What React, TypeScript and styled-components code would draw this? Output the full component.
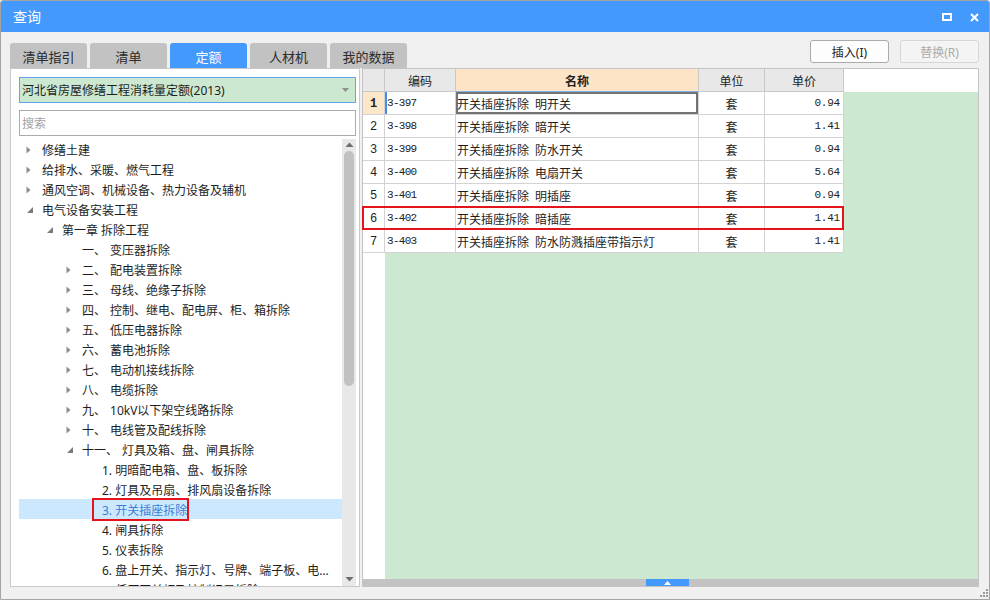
import React from 'react';
import styled, { createGlobalStyle } from 'styled-components';

const FONT = `"Noto Sans", "Noto Sans CJK SC", "Microsoft YaHei", sans-serif`;
const MONO = `"Liberation Mono", "Noto Sans CJK SC", monospace`;

const GlobalStyle = createGlobalStyle`
  html, body { margin: 0; padding: 0; background: #ffffff; }
  body {
    font-family: ${FONT};
    font-size: 12px;
    color: #1e1e1e;
  }
  * { box-sizing: border-box; }
`;

const Window = styled.div`
  position: relative;
  width: 990px;
  height: 600px;
  border: 1px solid #a4a4a4;
  border-radius: 3px 3px 0 0;
  background: #f0f0f0;
  display: flex;
  flex-direction: column;
  overflow: hidden;
`;

const TitleBar = styled.div`
  height: 31px;
  flex: none;
  background: #4499fd;
  color: #ffffff;
  display: flex;
  align-items: center;
  justify-content: space-between;
  padding: 0 10px 0 12px;
  font-size: 14px;
`;

const TitleText = styled.span`
  line-height: 31px;
`;

const WinButtons = styled.div`
  display: flex;
  align-items: center;
  gap: 18px;
  padding-top: 1px;
`;

const Body = styled.div`
  flex: 1;
  display: flex;
  flex-direction: column;
  padding: 8px 10px 12px 9px;
  min-height: 0;
`;

const Toolbar = styled.div`
  height: 28px;
  flex: none;
  display: flex;
  align-items: flex-start;
  justify-content: space-between;
`;

const Tabs = styled.div`
  display: flex;
  gap: 3px;
  margin-top: 3px;
`;

const Tab = styled.div<{ $active?: boolean }>`
  width: 77px;
  height: 25px;
  border-radius: 3px 3px 0 0;
  background: ${(p) => (p.$active ? '#4499fd' : '#c2c2c2')};
  color: ${(p) => (p.$active ? '#ffffff' : '#2a2a2a')};
  display: flex;
  align-items: center;
  justify-content: center;
  font-size: 13px;
  padding-top: 1px;
`;

const Buttons = styled.div`
  display: flex;
  gap: 11px;
`;

const Button = styled.div<{ $disabled?: boolean }>`
  width: 79px;
  height: 23px;
  border: 1px solid ${(p) => (p.$disabled ? '#d6d6d6' : '#ababab')};
  border-radius: 3px;
  background: ${(p) => (p.$disabled ? '#f4f4f4' : '#fdfdfd')};
  color: ${(p) => (p.$disabled ? '#ababab' : '#222222')};
  display: flex;
  align-items: center;
  justify-content: center;
  font-size: 12px;
`;

const Content = styled.div`
  flex: 1;
  display: flex;
  gap: 2px;
  min-height: 0;
`;

const LeftPanel = styled.div`
  width: 350px;
  flex: none;
  background: #ffffff;
  border: 1px solid #c9c9c9;
  padding: 8px 3px 0 8px;
  display: flex;
  flex-direction: column;
  min-height: 0;
`;

const Select = styled.div`
  height: 26px;
  flex: none;
  border: 1px solid #62a3ec;
  background: #cde8d1;
  display: flex;
  align-items: center;
  justify-content: space-between;
  padding: 0 6px 0 2px;
  font-size: 12px;
  color: #1e1e1e;
`;

const Search = styled.div`
  height: 26px;
  flex: none;
  margin-top: 7px;
  border: 1px solid #ababab;
  background: #ffffff;
  display: flex;
  align-items: center;
  padding: 0 2px;
  color: #a3a3a3;
  font-size: 12px;
`;

const TreeArea = styled.div`
  flex: 1;
  margin-top: 3px;
  display: flex;
  min-height: 0;
  overflow: hidden;
`;

const TreeList = styled.div`
  flex: 1;
  min-width: 0;
  overflow: hidden;
`;

const TreeRow = styled.div<{ $level: number; $selected?: boolean }>`
  height: 20px;
  display: flex;
  align-items: center;
  padding-top: 3px;
  padding-left: ${(p) => 3 + p.$level * 20}px;
  padding-right: 6px;
  background: ${(p) => (p.$selected ? '#cce8ff' : 'transparent')};
  color: ${(p) => (p.$selected ? '#3a7fd4' : '#1e1e1e')};
  white-space: nowrap;
`;

const Toggle = styled.span`
  width: 20px;
  flex: none;
  display: flex;
  align-items: center;
  padding-left: 4px;
  padding-bottom: 2px;
`;

const TreeLabel = styled.span<{ $marked?: boolean }>`
  position: relative;
  min-width: 0;
  overflow: ${(p) => (p.$marked ? 'visible' : 'hidden')};
  text-overflow: ellipsis;
  line-height: 17px;
  &::after {
    content: '';
    display: ${(p) => (p.$marked ? 'block' : 'none')};
    position: absolute;
    left: -10px;
    right: -2px;
    top: -4px;
    bottom: -2px;
    border: 2px solid #e3141c;
  }
`;

const Num = styled.span`
  margin-right: 4px;
`;

const VScroll = styled.div`
  width: 14px;
  flex: none;
  background: #e8e8e8;
  display: flex;
  flex-direction: column;
  align-items: center;
  padding: 3px 0 4px;
`;

const VThumb = styled.div`
  width: 10px;
  height: 235px;
  margin-top: 4px;
  border-radius: 5px;
  background: #c1c1c1;
`;

const VSpacer = styled.div`
  flex: 1;
`;

const RightPanel = styled.div`
  flex: 1;
  min-width: 0;
  background: #ffffff;
  border: 1px solid #c4c4c4;
  display: flex;
  flex-direction: column;
`;

const Grid = styled.div`
  flex: 1;
  display: flex;
  flex-direction: column;
  min-height: 0;
`;

const HeadRow = styled.div`
  height: 23px;
  flex: none;
  display: flex;
`;

const HeadCell = styled.div<{ $w: number; $active?: boolean }>`
  width: ${(p) => p.$w}px;
  flex: none;
  background: ${(p) => (p.$active ? '#fde4c6' : '#e8e8e8')};
  border-right: 1px solid #c8c8c8;
  border-bottom: 1px solid ${(p) => (p.$active ? '#7fb2ea' : '#c8c8c8')};
  display: flex;
  align-items: center;
  justify-content: center;
  padding-top: 1px;
  font-weight: ${(p) => (p.$active ? 700 : 400)};
  font-size: 12px;
  color: #222;
`;

const Filler = styled.div<{ $green?: boolean }>`
  flex: 1;
  background: ${(p) => (p.$green ? '#cde8d1' : '#ffffff')};
`;

const Row = styled.div`
  height: 23px;
  flex: none;
  display: flex;
`;

const RowCells = styled.div<{ $marked?: boolean }>`
  position: relative;
  width: 481px;
  flex: none;
  display: flex;
  background: #ffffff;
  &::after {
    content: '';
    display: ${(p) => (p.$marked ? 'block' : 'none')};
    position: absolute;
    left: -1px;
    right: 0;
    top: -1px;
    bottom: 0;
    border: 2px solid #e3141c;
    pointer-events: none;
  }
`;

const Cell = styled.div<{ $w: number; $align?: string }>`
  width: ${(p) => p.$w}px;
  flex: none;
  border-right: 1px solid #d3d3d3;
  border-bottom: 1px solid #d3d3d3;
  display: flex;
  align-items: center;
  justify-content: ${(p) => p.$align || 'flex-start'};
  padding: 0 1px;
  white-space: nowrap;
  overflow: hidden;
`;

const NumCell = styled(Cell)<{ $current?: boolean }>`
  background: ${(p) => (p.$current ? '#fde7cb' : '#ffffff')};
  font-family: ${MONO};
  font-size: 12px;
  font-weight: ${(p) => (p.$current ? 700 : 400)};
  color: #222;
  padding-top: 1px;
`;

const CodeCell = styled(Cell)<{ $current?: boolean }>`
  font-family: ${MONO};
  font-size: 11px;
  letter-spacing: -0.7px;
  padding-left: 2px;
  color: #222;
  box-shadow: ${(p) => (p.$current ? 'inset 2px 0 0 #3f8fe9' : 'none')};
`;

const NameCell = styled(Cell)<{ $current?: boolean }>`
  font-size: 12px;
  word-spacing: 3px;
  padding-top: 2px;
  color: #1e1e1e;
  box-shadow: ${(p) => (p.$current ? 'inset 0 0 0 2px #737373' : 'none')};
`;

const UnitCell = styled(Cell)`
  font-size: 12px;
  padding-top: 2px;
  color: #1e1e1e;
`;

const PriceCell = styled(Cell)`
  font-family: ${MONO};
  font-size: 11px;
  letter-spacing: -0.2px;
  color: #222;
  padding-right: 3px;
`;

const BottomFill = styled.div`
  flex: 1;
  display: flex;
`;

const WhiteCol = styled.div`
  width: 22px;
  flex: none;
  background: #ffffff;
`;

const HScroll = styled.div`
  height: 7px;
  flex: none;
  background: #c3c3c3;
  display: flex;
  justify-content: center;
  padding-right: 6px;
`;

const HThumb = styled.div`
  width: 43px;
  height: 7px;
  background: #4499fd;
  display: flex;
  align-items: center;
  justify-content: center;
`;

const Grip = styled.svg`
  position: absolute;
  right: 1px;
  bottom: 2px;
`;

const ClosedArrow = () => (
  <svg width="8" height="8" viewBox="0 0 8 8">
    <path d="M0.5 0.5 L4.5 4 L0.5 7.5 Z" fill="#8c8c8c" />
  </svg>
);

const OpenArrow = () => (
  <svg width="8" height="8" viewBox="0 0 8 8">
    <path d="M7 1 L7 7 L1 7 Z" fill="#7a7a7a" />
  </svg>
);

type TreeNode = {
  level: number;
  state: 'open' | 'closed' | 'leaf';
  num?: string;
  text: string;
  selected?: boolean;
  marked?: boolean;
};

const tree: TreeNode[] = [
  { level: 0, state: 'closed', text: '修缮土建' },
  { level: 0, state: 'closed', text: '给排水、采暖、燃气工程' },
  { level: 0, state: 'closed', text: '通风空调、机械设备、热力设备及辅机' },
  { level: 0, state: 'open', text: '电气设备安装工程' },
  { level: 1, state: 'open', text: '第一章 拆除工程' },
  { level: 2, state: 'leaf', num: '一、', text: '变压器拆除' },
  { level: 2, state: 'closed', num: '二、', text: '配电装置拆除' },
  { level: 2, state: 'closed', num: '三、', text: '母线、绝缘子拆除' },
  { level: 2, state: 'closed', num: '四、', text: '控制、继电、配电屏、柜、箱拆除' },
  { level: 2, state: 'closed', num: '五、', text: '低压电器拆除' },
  { level: 2, state: 'closed', num: '六、', text: '蓄电池拆除' },
  { level: 2, state: 'closed', num: '七、', text: '电动机接线拆除' },
  { level: 2, state: 'closed', num: '八、', text: '电缆拆除' },
  { level: 2, state: 'closed', num: '九、', text: '10kV以下架空线路拆除' },
  { level: 2, state: 'closed', num: '十、', text: '电线管及配线拆除' },
  { level: 2, state: 'open', num: '十一、', text: '灯具及箱、盘、闸具拆除' },
  { level: 3, state: 'leaf', text: '1. 明暗配电箱、盘、板拆除' },
  { level: 3, state: 'leaf', text: '2. 灯具及吊扇、排风扇设备拆除' },
  { level: 3, state: 'leaf', text: '3. 开关插座拆除', selected: true, marked: true },
  { level: 3, state: 'leaf', text: '4. 闸具拆除' },
  { level: 3, state: 'leaf', text: '5. 仪表拆除' },
  { level: 3, state: 'leaf', text: '6. 盘上开关、指示灯、号牌、端子板、电阻器拆除' },
  { level: 3, state: 'leaf', text: '7. 低压开关柜及控制记录拆除' },
];

type Item = { code: string; name: string; unit: string; price: string };

const items: Item[] = [
  { code: '3-397', name: '开关插座拆除 明开关', unit: '套', price: '0.94' },
  { code: '3-398', name: '开关插座拆除 暗开关', unit: '套', price: '1.41' },
  { code: '3-399', name: '开关插座拆除 防水开关', unit: '套', price: '0.94' },
  { code: '3-400', name: '开关插座拆除 电扇开关', unit: '套', price: '5.64' },
  { code: '3-401', name: '开关插座拆除 明插座', unit: '套', price: '0.94' },
  { code: '3-402', name: '开关插座拆除 暗插座', unit: '套', price: '1.41' },
  { code: '3-403', name: '开关插座拆除 防水防溅插座带指示灯', unit: '套', price: '1.41' },
];

const tabs = ['清单指引', '清单', '定额', '人材机', '我的数据'];

export default function App() {
  return (
    <>
      <GlobalStyle />
      <Window>
        <TitleBar>
          <TitleText>查询</TitleText>
          <WinButtons>
            <svg width="10" height="8" viewBox="0 0 10 8">
              <rect x="1" y="1" width="8" height="6" fill="none" stroke="#fff" strokeWidth="2" />
            </svg>
            <svg width="9" height="9" viewBox="0 0 9 9">
              <path d="M1 1 L8 8 M8 1 L1 8" stroke="#fff" strokeWidth="2" />
            </svg>
          </WinButtons>
        </TitleBar>
        <Body>
          <Toolbar>
            <Tabs>
              {tabs.map((t) => (
                <Tab key={t} $active={t === '定额'}>
                  {t}
                </Tab>
              ))}
            </Tabs>
            <Buttons>
              <Button>插入(I)</Button>
              <Button $disabled>替换(R)</Button>
            </Buttons>
          </Toolbar>
          <Content>
            <LeftPanel>
              <Select>
                <span>河北省房屋修缮工程消耗量定额(2013)</span>
                <svg width="7" height="4" viewBox="0 0 7 4">
                  <path d="M0 0 L7 0 L3.5 4 Z" fill="#909090" />
                </svg>
              </Select>
              <Search>搜索</Search>
              <TreeArea>
                <TreeList>
                  {tree.map((n, i) => (
                    <TreeRow key={i} $level={n.level} $selected={n.selected}>
                      <Toggle>
                        {n.state === 'closed' && <ClosedArrow />}
                        {n.state === 'open' && <OpenArrow />}
                      </Toggle>
                      <TreeLabel $marked={n.marked}>
                        {n.num && <Num>{n.num}</Num>}
                        {n.text}
                      </TreeLabel>
                    </TreeRow>
                  ))}
                </TreeList>
                <VScroll>
                  <svg width="9" height="5" viewBox="0 0 9 5">
                    <path d="M0.5 5 L4.5 0.5 L8.5 5 Z" fill="#6f6f6f" />
                  </svg>
                  <VThumb />
                  <VSpacer />
                  <svg width="9" height="5" viewBox="0 0 9 5">
                    <path d="M0.5 0 L8.5 0 L4.5 4.5 Z" fill="#6f6f6f" />
                  </svg>
                </VScroll>
              </TreeArea>
            </LeftPanel>
            <RightPanel>
              <Grid>
                <HeadRow>
                  <HeadCell $w={22} />
                  <HeadCell $w={71}>编码</HeadCell>
                  <HeadCell $w={243} $active>
                    名称
                  </HeadCell>
                  <HeadCell $w={66}>单位</HeadCell>
                  <HeadCell $w={79}>单价</HeadCell>
                  <Filler />
                </HeadRow>
                {items.map((it, i) => (
                  <Row key={it.code}>
                    <RowCells $marked={i === 5}>
                      <NumCell $w={22} $align="center" $current={i === 0}>
                        {i + 1}
                      </NumCell>
                      <CodeCell $w={71} $current={i === 0}>
                        {it.code}
                      </CodeCell>
                      <NameCell $w={243} $current={i === 0}>
                        {it.name}
                      </NameCell>
                      <UnitCell $w={66} $align="center">
                        {it.unit}
                      </UnitCell>
                      <PriceCell $w={79} $align="flex-end">
                        {it.price}
                      </PriceCell>
                    </RowCells>
                    <Filler $green />
                  </Row>
                ))}
                <BottomFill>
                  <WhiteCol />
                  <Filler $green />
                </BottomFill>
              </Grid>
              <HScroll>
                <HThumb>
                  <svg width="7" height="4" viewBox="0 0 7 4">
                    <path d="M0 4 L3.5 0 L7 4 Z" fill="#ffffff" />
                  </svg>
                </HThumb>
              </HScroll>
            </RightPanel>
          </Content>
        </Body>
        <Grip width="8" height="8" viewBox="0 0 8 8">
          <rect x="6" y="0" width="2" height="2" fill="#9b9b9b" />
          <rect x="3" y="3" width="2" height="2" fill="#9b9b9b" />
          <rect x="6" y="3" width="2" height="2" fill="#9b9b9b" />
          <rect x="0" y="6" width="2" height="2" fill="#9b9b9b" />
          <rect x="3" y="6" width="2" height="2" fill="#9b9b9b" />
          <rect x="6" y="6" width="2" height="2" fill="#9b9b9b" />
        </Grip>
      </Window>
    </>
  );
}
